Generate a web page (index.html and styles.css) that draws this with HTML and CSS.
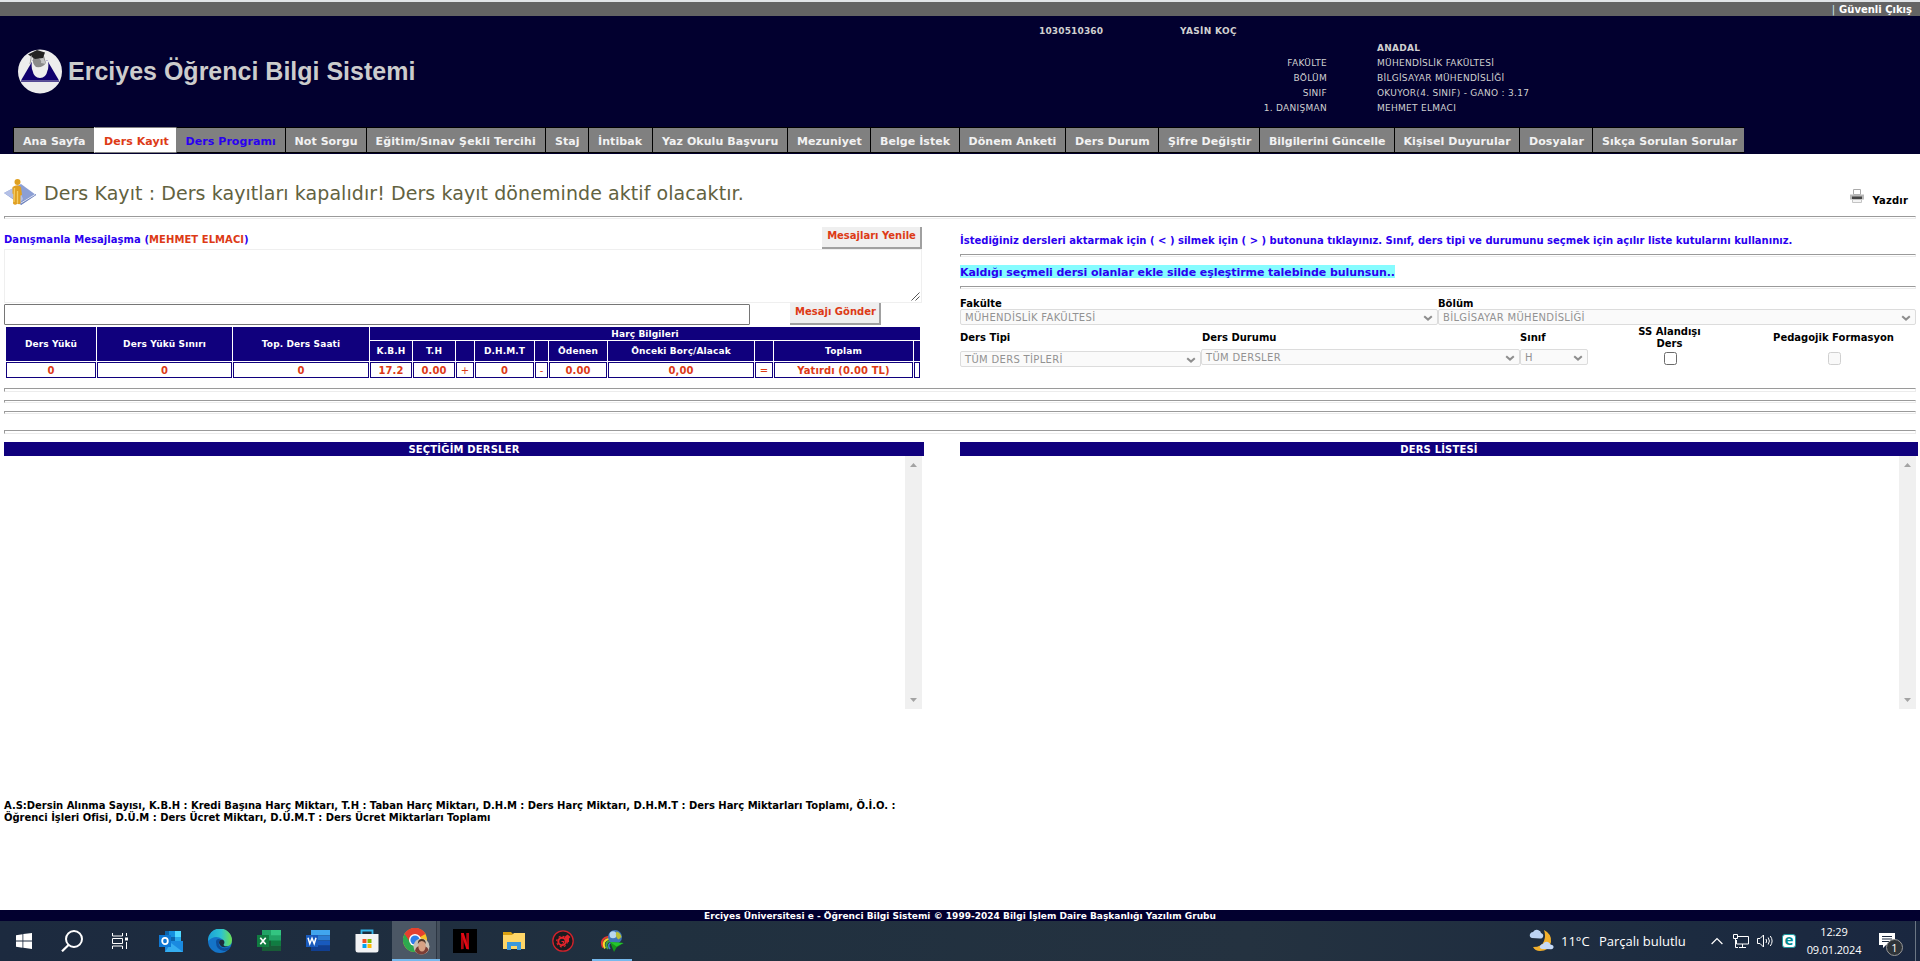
FILE: index.html
```html
<!DOCTYPE html>
<html lang="tr">
<head>
<meta charset="utf-8">
<title>Erciyes Öğrenci Bilgi Sistemi</title>
<link rel="stylesheet" href="styles.css">
</head>
<body>
<svg class="defs" width="0" height="0">
  <symbol id="chev" viewBox="0 0 10 6"><path d="M1.2 1.2 5 4.6 8.8 1.2" fill="none" stroke="#8e8e8e" stroke-width="2"/></symbol>
</svg>

<div class="topbar"><span class="sep">|</span><a class="logout">Güvenli Çıkış</a></div>

<header class="header">
  <div class="brand">
    <svg class="logo" width="44" height="45" viewBox="0 0 44 45">
      <circle cx="22" cy="22.5" r="22" fill="#ededed"/>
      <path d="M3 31.5 15 11h14l12 20.500z" fill="#10006c"/>
      <path d="M3 32.200h38" stroke="#10006c" stroke-width="1"/>
      <path d="M14 12q-1 6 .5 9.500Q16 29 22 29t7.500-7.500Q31 18 30 12l-8-4z" fill="#efefef"/>
      <path d="M15 9q-1 6 3 9 7 1 10-4l-2-7z" fill="#8b8b8b"/>
      <path d="M20 9q4 2 3 5l5 1-3-7z" fill="#c4c4c4"/>
      <path d="M10 5.500 19 1l8 2.500L25 9l-8 1z" fill="#232323"/>
      <path d="M13.500 6.500 12 15" stroke="#9a9a9a" fill="none"/>
    </svg>
    <h1 class="brand-name">Erciyes Öğrenci Bilgi Sistemi</h1>
  </div>
  <div class="student">
    <div class="ident"><b class="num">1030510360</b><b>YASİN KOÇ</b></div>
    <dl class="info">
      <dt></dt><dd class="strong">ANADAL</dd>
      <dt>FAKÜLTE</dt><dd>MÜHENDİSLİK FAKÜLTESİ</dd>
      <dt>BÖLÜM</dt><dd>BİLGİSAYAR MÜHENDİSLİĞİ</dd>
      <dt>SINIF</dt><dd>OKUYOR(4. SINIF) - GANO : 3.17</dd>
      <dt>1. DANIŞMAN</dt><dd>MEHMET ELMACI</dd>
    </dl>
  </div>
</header>

<nav class="nav">
  <a>Ana Sayfa</a><a class="active">Ders Kayıt</a><a class="blue">Ders Programı</a><a>Not Sorgu</a><a>Eğitim/Sınav Şekli Tercihi</a><a>Staj</a><a>İntibak</a><a>Yaz Okulu Başvuru</a><a>Mezuniyet</a><a>Belge İstek</a><a>Dönem Anketi</a><a>Ders Durum</a><a>Şifre Değiştir</a><a>Bilgilerini Güncelle</a><a>Kişisel Duyurular</a><a>Dosyalar</a><a>Sıkça Sorulan Sorular</a>
</nav>

<main class="main">
  <div class="page-head">
    <svg class="page-icon" width="33" height="27" viewBox="0 0 33 27">
      <path d="M0 14 17 5l15 11-15 10z" fill="#8c9fd4"/>
      <path d="M0 14 14 6.500 19 20 16 24z" fill="#b4c0e6"/>
      <path d="M17 26 32 16v-1L17 23z" fill="#7184bd"/>
      <path d="M17 24 31 15.500" stroke="#dfe5f5"/>
      <circle cx="13.500" cy="3" r="3" fill="#dfa020"/>
      <path d="M8.500 8q5-3.500 8.500 0l1 8-1.500.5v8q-1.500 1.500-3 0-2.500 2.500-4.500 0l.5-9-1-1z" fill="#e0a023"/>
      <path d="M10.500 9 10 23M13.500 12v12" stroke="#f5cc62" stroke-width="1.300"/>
    </svg>
    <h2 class="page-title">Ders Kayıt : Ders kayıtları kapalıdır! Ders kayıt döneminde aktif olacaktır.</h2>
    <a class="print">
      <svg width="14" height="14" viewBox="0 0 14 14">
        <path d="M3.500.500h7v5h-7z" fill="#fff" stroke="#aaa"/>
        <path d="M0 5.500h14v5H0z" fill="#b9b9b9"/>
        <path d="M2 7.500h10v2.500H2z" fill="#444"/>
        <path d="M2.500 10.500h9v3h-9z" fill="#f4f4f4" stroke="#c4c4c4"/>
      </svg>
      <span>Yazdır</span>
    </a>
  </div>
  <div class="rule"></div>

  <div class="cols">
    <section class="left">
      <div class="msg-head">
        <div class="msg-title">Danışmanla Mesajlaşma (<span class="red">MEHMET ELMACI</span>)</div>
        <div class="btn refresh">Mesajları Yenile</div>
      </div>
      <div class="messages"><svg width="9" height="9" viewBox="0 0 9 9"><path d="M.500 8.500 8.500.500M4.500 8.500l4-4" stroke="#555"/></svg></div>
      <div class="send-row">
        <div class="msg-input"></div>
        <div class="btn send">Mesajı Gönder</div>
      </div>
      <table class="fees">
        <colgroup><col class="c90"><col class="c135"><col class="c136"><col class="c42"><col class="c42"><col class="c18"><col class="c59"><col class="c13"><col class="c58"><col class="c146"><col class="c18"><col class="c139"><col class="c6"></colgroup>
        <tr class="r1"><th rowspan="2">Ders Yükü</th><th rowspan="2">Ders Yükü Sınırı</th><th rowspan="2">Top. Ders Saati</th><th colspan="10">Harç Bilgileri</th></tr>
        <tr class="r2"><th>K.B.H</th><th>T.H</th><th></th><th>D.H.M.T</th><th></th><th>Ödenen</th><th>Önceki Borç/Alacak</th><th></th><th>Toplam</th><th></th></tr>
        <tr class="r3"><td>0</td><td>0</td><td>0</td><td>17.2</td><td>0.00</td><td class="thin">+</td><td>0</td><td class="thin">-</td><td>0.00</td><td>0,00</td><td class="thin">=</td><td>Yatırdı (0.00 TL)</td><td></td></tr>
      </table>
    </section>

    <section class="right">
      <p class="hint">İstediğiniz dersleri aktarmak için ( &lt; ) silmek için ( &gt; ) butonuna tıklayınız. Sınıf, ders tipi ve durumunu seçmek için açılır liste kutularını kullanınız.</p>
      <div class="rule"></div>
      <p class="notice"><span>Kaldığı seçmeli dersi olanlar ekle silde eşleştirme talebinde bulunsun..</span></p>
      <div class="rule"></div>
      <div class="filters top">
        <label>Fakülte</label><label>Bölüm</label>
        <div class="select">MÜHENDİSLİK FAKÜLTESİ<svg width="10" height="6"><use href="#chev"/></svg></div>
        <div class="select">BİLGİSAYAR MÜHENDİSLİĞİ<svg width="10" height="6"><use href="#chev"/></svg></div>
      </div>
      <div class="filters bottom">
        <label>Ders Tipi</label><label>Ders Durumu</label><label>Sınıf</label><label class="mid">SS Alandışı<br>Ders</label><label class="mid">Pedagojik Formasyon</label>
        <div class="select low">TÜM DERS TİPLERİ<svg width="10" height="6"><use href="#chev"/></svg></div>
        <div class="select">TÜM DERSLER<svg width="10" height="6"><use href="#chev"/></svg></div>
        <div class="select">H<svg width="10" height="6"><use href="#chev"/></svg></div>
        <span class="check"></span><span class="check off"></span>
      </div>
    </section>
  </div>

  <div class="rules">
    <div class="rule tall"></div>
    <div class="rule"></div>
    <div class="rule"></div>
    <div class="rule tall last"></div>
  </div>

  <div class="lists">
    <section class="list">
      <h3>SEÇTİĞİM DERSLER</h3>
      <div class="scroll"><svg width="7" height="4"><path d="M3.500 0 7 4H0z" fill="#a3a3a3"/></svg><svg width="7" height="4"><path d="M3.500 4 7 0H0z" fill="#a3a3a3"/></svg></div>
    </section>
    <section class="list">
      <h3>DERS LİSTESİ</h3>
      <div class="scroll"><svg width="7" height="4"><path d="M3.500 0 7 4H0z" fill="#a3a3a3"/></svg><svg width="7" height="4"><path d="M3.500 4 7 0H0z" fill="#a3a3a3"/></svg></div>
    </section>
  </div>

  <p class="legend">A.S:Dersin Alınma Sayısı, K.B.H : Kredi Başına Harç Miktarı, T.H : Taban Harç Miktarı, D.H.M : Ders Harç Miktarı, D.H.M.T : Ders Harç Miktarları Toplamı, Ö.İ.O. :<br>Öğrenci İşleri Ofisi, D.Ü.M : Ders Ücret Miktarı, D.Ü.M.T : Ders Ücret Miktarları Toplamı</p>
</main>

<footer class="footer">Erciyes Üniversitesi e - Öğrenci Bilgi Sistemi © 1999-2024 Bilgi İşlem Daire Başkanlığı Yazılım Grubu</footer>

<div class="taskbar">
  <div class="apps">
    <span><svg width="16" height="16" viewBox="0 0 16 16"><path d="M0 2.200 6.500 1.300V7.500H0zM7.300 1.100 16 0v7.500H7.300zM0 8.400h6.500v6.300L0 13.800zM7.300 8.400H16V16l-8.700-1.200z" fill="#fff"/></svg></span>
    <span><svg width="22" height="22" viewBox="0 0 22 22"><circle cx="13" cy="9" r="8" fill="none" stroke="#fff" stroke-width="2"/><path d="M7.500 15 1 21.300" stroke="#fff" stroke-width="2.200"/></svg></span>
    <span><svg width="16" height="16" viewBox="0 0 16 16"><path d="M.500 0v3h10V0M.500 16v-3h10v3M.500 5.500h10v5H.500zM14.500 0v3M14.500 9v7" fill="none" stroke="#fff"/><path d="M13 4.500h3v3h-3z" fill="#fff"/></svg></span>
    <span class="w"><svg width="24" height="22" viewBox="0 0 24 22"><path d="M6 1h16v14H6z" fill="#0a64ad"/><path d="M10 1h6v6h-6z" fill="#1490df"/><path d="M16 1h6v6h-6z" fill="#50d9ff"/><path d="M16 7h6v6h-6z" fill="#28a8ea"/><path d="M6 11 24 11v11H6z" fill="#1a8ae0"/><path d="M6 22h18L12 13z" fill="#35aef0"/><path d="M0 5h12v12H0z" fill="#0f78d4"/><ellipse cx="6" cy="11" rx="2.800" ry="3.200" fill="none" stroke="#fff" stroke-width="1.800"/></svg></span>
    <span class="w"><svg width="24" height="24" viewBox="0 0 24 24"><defs><linearGradient id="eg" x1="0" x2="1"><stop offset="0" stop-color="#1ba0d8"/><stop offset=".55" stop-color="#2dc3d0"/><stop offset="1" stop-color="#6fe04e"/></linearGradient></defs><circle cx="12" cy="12" r="12" fill="#1474c8"/><path d="M0 12A12 12 0 0 1 24 11q0 6-6.500 6.500-3.500 0-3.200-1.500Q17 13 14 10 7 5 0 12z" fill="url(#eg)"/><path d="M8 13q0 8 8 9 4 0 6.500-4-9 3-11.500-2-1-4 2-5.500Q8 9 8 13z" fill="#0d4d9a"/><path d="M11 14q0-4 4-3.200 2.600 2 .500 5.200.800 2 5.500 1.500-8 2.500-10-3.500z" fill="#1c2b3d"/></svg></span>
    <span class="w"><svg width="24" height="22" viewBox="0 0 24 22"><path d="M5 0h19v21H5z" fill="#21a366"/><path d="M14 0h10v5.300H14z" fill="#33c481"/><path d="M5 10.500h9V21H5z" fill="#185c37"/><path d="M14 10.500h10v5H14z" fill="#107c41"/><path d="M14 15.500h10V21H14z" fill="#185c37"/><path d="M0 5h12v12H0z" fill="#107c41"/><path d="m3.300 7.800 5.400 6.400M8.700 7.800l-5.400 6.400" stroke="#fff" stroke-width="1.700"/></svg></span>
    <span class="w"><svg width="24" height="22" viewBox="0 0 24 22"><path d="M5 0h19v5.300H5z" fill="#41a5ee"/><path d="M5 5.300h19v5.200H5z" fill="#2b7cd3"/><path d="M5 10.500h19v5.200H5z" fill="#185abd"/><path d="M5 15.700h19V21H5z" fill="#103f91"/><path d="M0 5h12v12H0z" fill="#185abd"/><path d="m2 7.800 1.800 6L6 8.300l2.200 5.500 1.800-6" fill="none" stroke="#fff" stroke-width="1.500"/></svg></span>
    <span class="w"><svg width="24" height="24" viewBox="0 0 24 24"><path d="M6.500 6V1.500h11V6" fill="none" stroke="#35b5ea" stroke-width="1.800"/><path d="M.500 5h23v16q0 2.500-2.500 2.500H3Q.500 23.500.500 21z" fill="#f2f3f5"/><path d="M7.500 10h4v4h-4z" fill="#f25022"/><path d="M12.500 10h4v4h-4z" fill="#7fba00"/><path d="M7.500 15h4v4h-4z" fill="#00a4ef"/><path d="M12.500 15h4v4h-4z" fill="#ffb900"/></svg></span>
    <span class="w running active"><svg width="27" height="27" viewBox="0 0 27 27"><circle cx="12" cy="12" r="12" fill="#f7c325"/><path d="M12 12 1.600 6A12 12 0 0 1 22.400 6z" fill="#e5402f"/><path d="M1.600 6A12 12 0 0 0 12 24l5-9-5-3z" fill="#2da94f"/><path d="M12 6h10.400A12 12 0 0 0 1.600 6L7 14z" fill="#e5402f"/><circle cx="12" cy="12" r="6" fill="#fff"/><circle cx="12" cy="12" r="4.600" fill="#2f7de9"/><circle cx="18.500" cy="18.500" r="8" fill="#c9c1b5"/><path d="M12 23q1-5 5-5h4q4 1 4.500 4-3 4.500-7 4.500T12 23z" fill="#7b3d35"/><ellipse cx="19" cy="18" rx="3.700" ry="5.500" fill="#d6a184"/><path d="M14.800 16q0-5 4-5t4 5q-1.500-3-4-3t-4 3z" fill="#4b3427"/></svg></span>
    <span class="w"><svg width="24" height="24" viewBox="0 0 24 24"><path d="M0 0h24v24H0z" fill="#000"/><path d="M8 4h2.700v16L8 20.300zM13.300 4H16v16.300l-2.700-.3z" fill="#b1060f"/><path d="M8 4h2.700L16 20.300l-2.700-.3z" fill="#e50914"/></svg></span>
    <span class="w"><svg width="22" height="20" viewBox="0 0 22 20"><path d="M0 1h8l2 2h12v3H0z" fill="#d9a010"/><path d="M0 4h9l2-2h11v16H0z" fill="#ffd667"/><path d="M4 19v-8h14v8h-4v-4H8v4z" fill="#3b98dc"/></svg></span>
    <span class="w"><svg width="22" height="22" viewBox="0 0 22 22"><circle cx="11" cy="11" r="10.200" fill="#1a1c20" stroke="#d3222b" stroke-width="1.300"/><circle cx="10" cy="11.500" r="3.700" fill="none" stroke="#e3242b" stroke-width="2"/><circle cx="10" cy="11.500" r="5.300" fill="none" stroke="#e3242b" stroke-width="1.200" stroke-dasharray="2 2.160"/><path d="m12.500 7 3-2.500L18.500 7 17 8.500V12l-2.500.5z" fill="#e3242b"/><path d="M9.500 11.500h2.500l-1.500 3" stroke="#e3242b" fill="none"/></svg></span>
    <span class="w running"><svg width="24" height="22" viewBox="0 0 24 22"><path d="M3 17.500Q-1 8.500 9.500 6.500" fill="none" stroke="#e13a30" stroke-width="2"/><path d="M5 18.500Q1 10.500 10 8.500" fill="none" stroke="#f5d728" stroke-width="2"/><path d="M8 19Q3.500 12.500 11 10.500" fill="none" stroke="#3fa842" stroke-width="2"/><path d="M10 19Q6.500 14 12 12" fill="none" stroke="#3e7fd0" stroke-width="1.500"/><circle cx="15" cy="7" r="7" fill="#3f75b8"/><circle cx="13" cy="4.800" r="3.500" fill="#b9d7ee"/><path d="M16.500 1.500q4 1 5 5.500l-3 2.500q-4-3-2-8z" fill="#b8bf35"/><path d="m10 12 4 10 2.500-4.500 7-4.500z" fill="#16961c"/><path d="m10 12 6.500 4.500 7-3.500z" fill="#25c62c"/></svg></span>
  </div>
  <div class="tray">
    <svg class="weather" width="25" height="24" viewBox="0 0 25 24"><path d="M15 1q8 4 7 12-2 9-11 9-5 0-7-4 9 0 11-6 2-5 0-11z" fill="#f2b02c"/><path d="M3 9q-3-1-2-4 1-2 3-2 2-3 5-2 3 1 3 3 3 1 2 4-1 2-3 1.500z" fill="#bcd3f4"/><path d="M13 20q-3-1-2-3 1-2 3-2 2-3 5-2 2 1 2.500 2.500Q25 16 24.500 18.500 24 20.500 22 20.300z" fill="#c7daf6"/></svg>
    <span class="temp">11°C</span><span class="cond">Parçalı bulutlu</span>
    <svg class="up" width="12" height="8" viewBox="0 0 12 8"><path d="M.600 7 6 1.500 11.400 7" fill="none" stroke="#fff" stroke-width="1.200"/></svg>
    <svg class="net" width="16" height="14" viewBox="0 0 16 14"><path d="M5 2.500h10.500v7.500H3.500V6M9.500 10v3.500M6 13.500h7M.500.500h4v4h-4zM2.500 5v8.500H5" fill="none" stroke="#fff"/></svg>
    <svg class="vol" width="17" height="14" viewBox="0 0 17 14"><path d="M.500 4.500H3l3.500-3.500v12L3 9.500H.500zM9 5q1.200 2 0 4M11.200 3.500q2.400 3.500 0 7M13.300 2q3.600 5 0 10" fill="none" stroke="#fff"/></svg>
    <span class="eset">e</span>
    <div class="clock"><span>12:29</span><span>09.01.2024</span></div>
    <div class="notif"><svg width="17" height="15" viewBox="0 0 17 15"><path d="M0 0h16v12h-9l-3 3v-3H0z" fill="#fff"/><path d="M3 3.500h10M3 6h10M3 8.500h7" stroke="#1c2a40"/></svg><b>1</b></div>
    <i class="desk"></i>
  </div>
</div>
</body>
</html>
```

FILE: styles.css
```css
* { box-sizing: border-box; margin: 0; padding: 0; }
body { width: 1920px; height: 961px; overflow: hidden; display: flex; flex-direction: column; background: #fff; color: #000; font: bold 10px/12px "DejaVu Sans", sans-serif; white-space: nowrap; }
svg { display: block; flex: none; }
.defs { position: absolute; }
.red { color: #dd3a16; }

.topbar { height: 16px; flex: none; display: flex; justify-content: flex-end; align-items: center; gap: 4px; padding: 2px 8px 0 0; background: #646464; border-top: 2px solid #e2e5e8; color: #fff; }
.sep { font-weight: normal; color: #cde9f2; }

.header { height: 111px; flex: none; display: flex; justify-content: space-between; background: #02002f; color: #d0d0d0; }
.brand { display: flex; align-items: flex-start; gap: 6px; padding: 33px 0 0 18px; }
.brand-name { font: bold 25px/45px "Liberation Sans", sans-serif; color: #ccc; }
.student { width: 881px; padding-top: 9px; font-size: 9px; }
.ident { display: flex; height: 13px; line-height: 13px; letter-spacing: 0.15px; }
.num { width: 141px; }
.ident b + b { letter-spacing: 0.32px; }
.info { display: grid; grid-template-columns: 288px 1fr; grid-template-rows: repeat(5, 15px); column-gap: 50px; padding-top: 3px; line-height: 15px; font-weight: normal; letter-spacing: 0.28px; }
.info dt { text-align: right; }
.info .strong { font-weight: bold; }

.nav { height: 27px; flex: none; display: flex; align-items: flex-start; padding-left: 13px; background: #02002f; }
.nav a { height: 26px; line-height: 27px; padding: 0 7px 0 9px; background: #808080; border: 1px solid #000; margin-right: -1px; font-size: 11px; color: #f2f2f2; letter-spacing: 0.07px; }
.nav a:nth-child(1) { width: 82px; }
.nav a:nth-child(2) { width: 82.500px; }
.nav a:nth-child(3) { width: 110px; }
.nav a:nth-child(4) { width: 82px; }
.nav a:nth-child(5) { width: 180.500px; letter-spacing: 0.15px; }
.nav a:nth-child(6) { width: 44px; }
.nav a:nth-child(7) { width: 65px; }
.nav a:nth-child(8) { width: 136px; }
.nav a:nth-child(9) { width: 84px; }
.nav a:nth-child(10) { width: 89.500px; }
.nav a:nth-child(11) { width: 107.500px; }
.nav a:nth-child(12) { width: 94px; }
.nav a:nth-child(13) { width: 102px; }
.nav a:nth-child(14) { width: 135.500px; letter-spacing: -0.04px; }
.nav a:nth-child(15) { width: 126.500px; }
.nav a:nth-child(16) { width: 74px; }
.nav a:nth-child(17) { width: 153px; border-right-color: #02002f; }
.nav .active { background: #fff; color: #dd3a16; border-color: #808080 #fff; }
.nav .blue { color: #2a00f0; border-left-color: #808080; }

.main { height: 756px; flex: none; padding: 0 4px; }
.page-head { height: 62px; display: flex; align-items: flex-start; padding-top: 25px; }
.page-title { font: 19px/27px "DejaVu Sans", sans-serif; letter-spacing: 0.075px; color: #62623f; margin: 1px 0 0 7px; }
.print { margin-left: auto; display: flex; gap: 9px; padding: 10px 8px 0 0; letter-spacing: 0.17px; }
.print span { padding-top: 5px; line-height: 13px; }
.rule { height: 3px; border: 1px solid; border-color: #9a9a9a #ececec #ececec #9a9a9a; }
.rule.tall { height: 4px; }

.cols { display: flex; gap: 38px; height: 169px; }
.left { width: 918px; }
.msg-head { display: flex; justify-content: space-between; height: 30px; padding-top: 8px; }
.msg-title { color: #2a00f0; padding-top: 7px; letter-spacing: 0.06px; }
.btn { background: #efefef; color: #dd3a16; border: solid #a0a0a0; border-width: 0 2px 2px 0; text-align: center; height: 22px; line-height: 18px; padding-left: 1px; }
.refresh { width: 100px; }
.messages { height: 54px; border: 1px solid #efefef; display: flex; justify-content: flex-end; align-items: flex-end; padding: 1px; }
.send-row { display: flex; gap: 40px; height: 23px; }
.msg-input { width: 746px; height: 21px; margin-top: 1px; border: 1px solid #767676; border-radius: 1px; }
.send { width: 91px; padding-left: 2px; }
.fees { width: 916px; margin: 0 0 0 1px; table-layout: fixed; border-spacing: 1px; text-align: center; }
.fees th { background: #10007d; color: #fff; font-size: 9px; line-height: 11px; padding-top: 1px; letter-spacing: 0.12px; }
.fees td { border: 1px solid #10007d; color: #dd3a16; font-size: 10px; line-height: 12px; padding-top: 1px; letter-spacing: 0.1px; }
.fees .thin { font-weight: normal; }
.r1 { height: 13px; } .r2 { height: 20px; } .r3 { height: 16px; }
.c90 { width: 90px; } .c135 { width: 135px; } .c136 { width: 136px; } .c42 { width: 42px; } .c18 { width: 18px; } .c59 { width: 59px; } .c13 { width: 13px; } .c58 { width: 58px; } .c146 { width: 146px; } .c139 { width: 139px; } .c6 { width: 6px; }

.right { width: 956px; }
.hint { height: 35px; padding-top: 16px; color: #2a00f0; letter-spacing: 0.008px; }
.notice { height: 29px; padding-top: 8px; font-size: 11px; line-height: 14px; letter-spacing: -0.07px; color: #2a00f0; }
.notice span { display: inline-block; height: 13px; line-height: 15px; background: #86fcff; }
.filters { display: grid; }
.top { grid-template-columns: 478px 478px; grid-template-rows: 11px 17px; padding-top: 9px; }
.top label { line-height: 12px; }
.bottom { grid-template-columns: 241px 319px 68px 163px 165px; grid-template-rows: 23px 20px; align-items: center; }
.bottom label:nth-child(2) { padding-left: 1px; }
.bottom .mid { text-align: center; }
.bottom .select, .bottom .check { align-self: start; }
.select { height: 16px; display: flex; align-items: center; justify-content: space-between; padding: 1px 4px 0 4px; border: 1px solid #dcdcdc; border-radius: 2px; background: #fafafa; color: #929292; font-weight: normal; letter-spacing: 0.32px; }
.bottom .low { margin-top: 2px; }
.check { justify-self: center; width: 13px; height: 13px; margin: 3px 0 0 1px; border: 1px solid #6b6b6b; border-radius: 2.500px; background: #fff; }
.check.off { border-color: #d0d0d0; background: #f9f9f9; }

.rules { height: 54px; display: flex; flex-direction: column; gap: 8px; }
.rules .last { margin-top: 8px; }
.lists { display: flex; gap: 36px; margin-right: -2px; }
.list { width: 920px; }
.list + .list { flex: 1; }
.list h3 { height: 14px; font: bold 10px/15px "DejaVu Sans", sans-serif; letter-spacing: 0.18px; text-align: center; color: #fff; background: #10007d; }
.scroll { width: 17px; height: 253px; margin: 0 2px 0 auto; padding: 7px 0; background: #f0f0f0; display: flex; flex-direction: column; justify-content: space-between; align-items: center; }
.legend { margin-top: 91px; letter-spacing: -0.025px; }

.footer { height: 11px; flex: none; background: #02002f; color: #fff; text-align: center; font-size: 9px; line-height: 12px; letter-spacing: 0.026px; }

.taskbar { height: 40px; flex: none; display: flex; justify-content: space-between; background: linear-gradient(90deg, #1c2a3f, #20303f 35%, #243240 65%, #1c2b40 88%, #1a2740); color: #fff; }
.apps, .tray { display: flex; align-items: center; }
.apps span { width: 48px; height: 40px; display: flex; align-items: center; justify-content: center; }
.apps .w { width: 49px; }
.apps span:nth-child(4) { margin-left: 2px; }
.apps .running { background: linear-gradient(#76b9ed, #76b9ed) 5px 38px / 40px 2px no-repeat; }
.apps .active { background: linear-gradient(#76b9ed, #76b9ed) 0 38px / 48px 2px no-repeat, linear-gradient(90deg, #4b5765 44px, #2c3643 44px, #2c3643 45px, #444f5c 45px, #444f5c 48px, transparent 48px); margin: 0 -1px 0 1px; }
.tray { font: 13px/20px "Open Sans", sans-serif; }
.weather { margin-right: 7px; }
.temp { width: 38px; }
.cond { width: 112px; }
.net { margin-left: 10px; }
.vol { margin-left: 8px; }
.eset { margin-left: 8px; width: 14px; height: 14px; border-radius: 3px; background: #fff; border: 1px solid #1c9aa0; color: #008a90; font: bold 15px/9px "Open Sans", sans-serif; text-align: center; }
.clock { margin-left: 10px; width: 56px; display: flex; flex-direction: column; text-align: center; font-size: 11px; line-height: 18px; letter-spacing: -0.15px; }
.notif { margin-left: 17px; width: 26px; height: 40px; padding-top: 12px; position: relative; }
.notif b { position: absolute; left: 7px; top: 18px; width: 17px; height: 17px; border-radius: 50%; background: #2e3338; border: 1px solid #999; font: 11px/15px "Open Sans", sans-serif; text-align: center; }
.desk { width: 5px; height: 40px; margin-left: 10px; border-left: 1px solid #6b7684; }
```
